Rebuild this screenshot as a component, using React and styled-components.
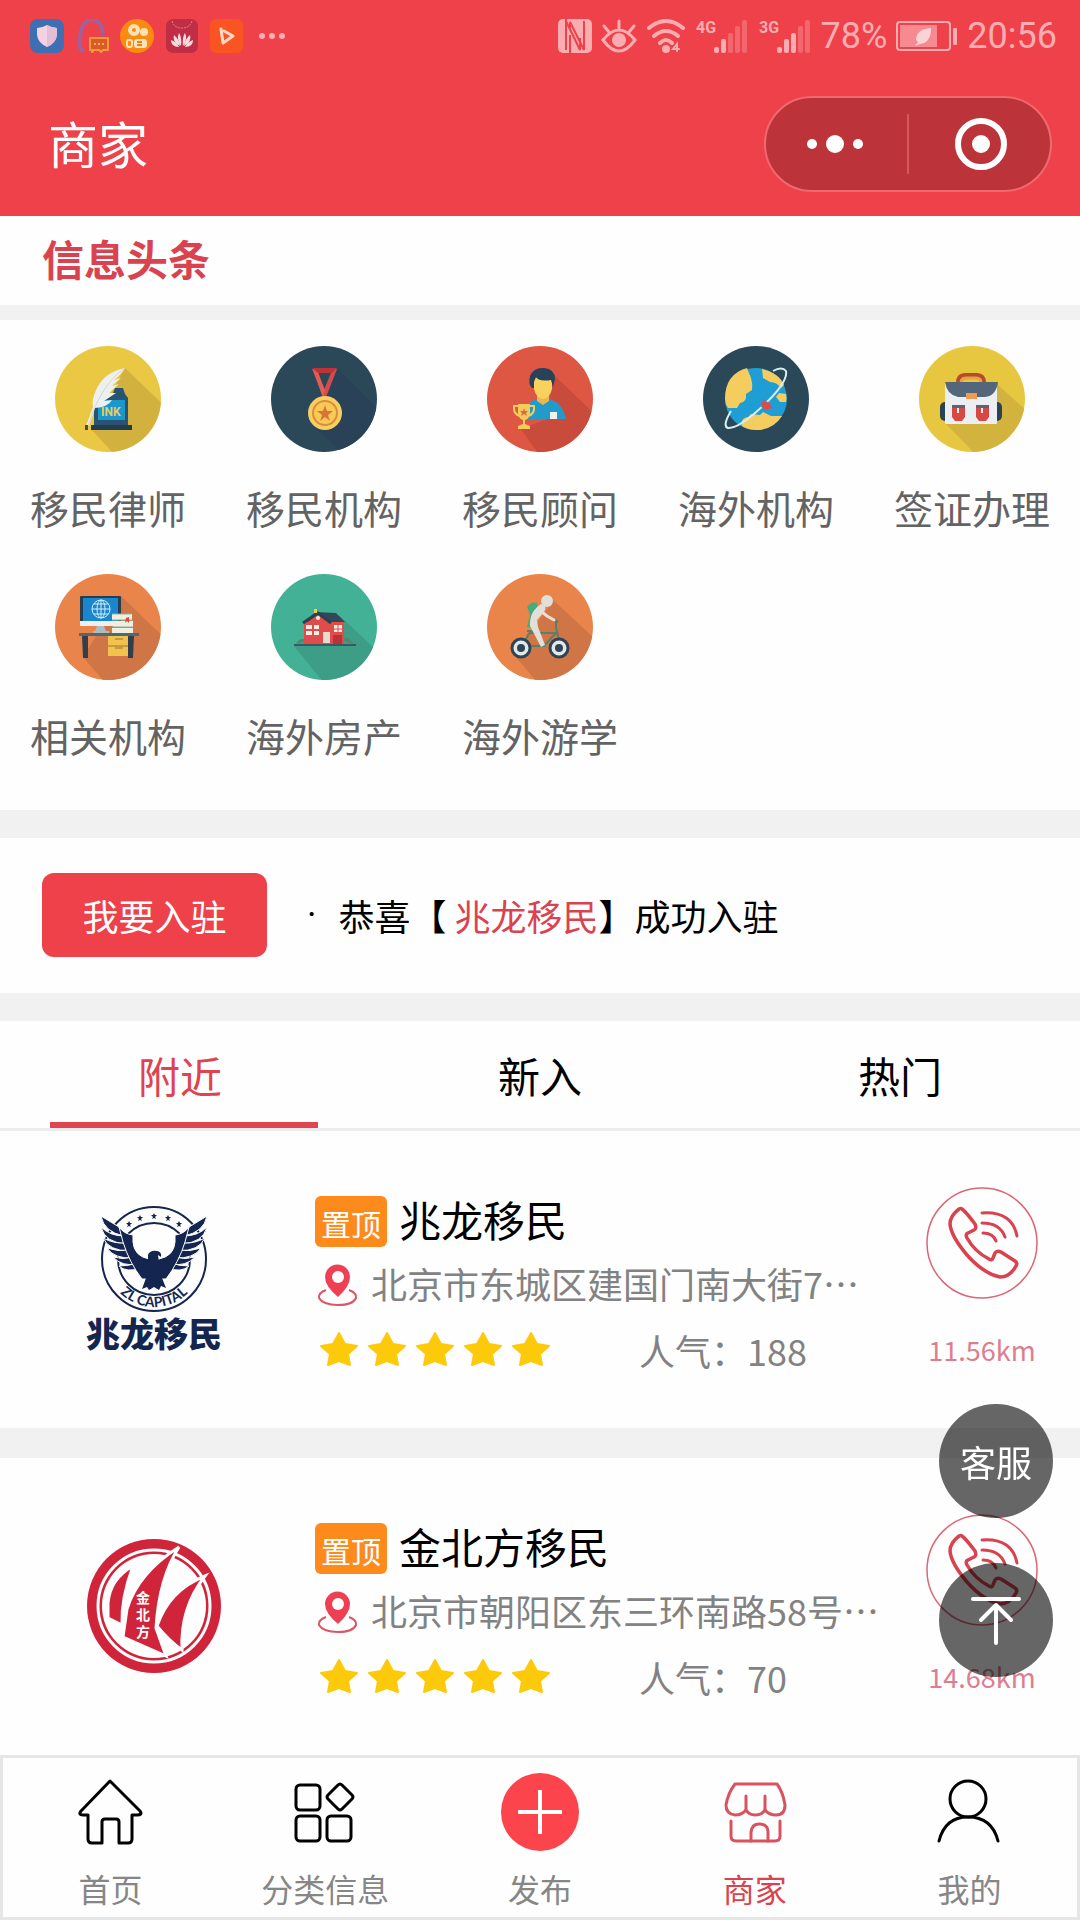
import React, { useState } from 'react';
import styled, { createGlobalStyle } from 'styled-components';

const GlobalStyle = createGlobalStyle`
	* { box-sizing: border-box; }
	body {
		margin: 0;
		background: #fefefe;
		font-family: "Noto Sans CJK SC", "Noto Sans", sans-serif;
		color: #000;
	}
	button {
		border: 0;
		padding: 0;
		background: none;
		font: inherit;
		color: inherit;
		cursor: pointer;
	}
	a { color: inherit; text-decoration: none; }
	h1, h2, h3, p, ul { margin: 0; padding: 0; font-weight: normal; }
	ul { list-style: none; }
	svg { display: block; flex: none; }
`

const Page = styled.div`
	display: flex;
	flex-direction: column;
	min-height: 100vh;
`

const Header = styled.header`
	background: #ee4149;
	color: #fff;
`

const StatusBar = styled.div`
	display: flex;
	justify-content: space-between;
	align-items: center;
	height: 72px;
	padding: 0 23px 0 30px;
	font-family: Roboto, sans-serif;
	font-size: 36px;
	color: #f9adb1;
`

const StatusGroup = styled.div`
	display: flex;
	align-items: center;
	gap: ${props => props.$gap}px;
`

const NavBar = styled.div`
	display: flex;
	justify-content: space-between;
	align-items: center;
	height: 144px;
	padding: 0 28px 0 48px;
`

const PageTitle = styled.h1`
	padding-bottom: 4px;
	font-size: 50px;
	line-height: 72px;
`

const Capsule = styled.div`
	display: flex;
	align-items: center;
	width: 288px;
	height: 96px;
	border: 2px solid #f0696f;
	border-radius: 48px;
	background: #bc333a;
`

const CapsuleButton = styled.button`
	flex: 1;
	display: flex;
	justify-content: center;
	height: 60px;
	align-items: center;
	& + & { border-left: 2px solid #d8575d; }
`

const Headline = styled.h2`
	padding: 12px 42px 17px;
	font-size: 42px;
	font-weight: bold;
	line-height: 60px;
	color: #d9434f;
`

const Band = styled.div`
	height: ${props => props.$size}px;
	background: #f1f1f1;
`

const CategoryGrid = styled.nav`
	display: grid;
	grid-template-columns: repeat(5, 1fr);
	row-gap: 37px;
	padding: 26px 0 45px;
`

const CategoryItem = styled.a`
	display: flex;
	flex-direction: column;
	align-items: center;
	gap: 25px;
	font-size: 39px;
	line-height: 60px;
	color: #636363;
`

const JoinRow = styled.section`
	display: flex;
	align-items: center;
	padding: 35px 42px 36px;
	gap: 40px;
	font-size: 36px;
`

const JoinButton = styled.button`
	width: 225px;
	height: 84px;
	border-radius: 12px;
	background: #ee4149;
	color: #fff;
`

const Notice = styled.p`
	display: flex;
	align-items: center;
	gap: 22px;
	white-space: nowrap;
	em { font-style: normal; color: #d9434f; }
`

const NoticeDot = styled.span`
	font-family: Roboto, sans-serif;
`

const Tabs = styled.div`
	border-bottom: 3px solid #ececec;
`

const TabList = styled.div`
	display: flex;
	height: 101px;
`

const Tab = styled.button`
	flex: 1;
	padding-top: 6px;
	font-size: 42px;
	line-height: 60px;
	color: ${props => props.$active ? '#e0434f' : '#000'};
`

const TabSlider = styled.div`
	width: 268px;
	height: 6px;
	margin-left: 50px;
	background: #df454e;
`

const MerchantCard = styled.li`
	display: flex;
	align-items: center;
	padding: 56px 42px 44px 82px;
	& + & { border-top: 30px solid #f1f1f1; }
`

const MerchantInfo = styled.div`
	flex: 1;
	min-width: 0;
	margin-left: 89px;
	font-size: 36px;
	color: #828282;
`

const InfoRow = styled.div`
	display: flex;
	align-items: center;
	height: 64px;
	gap: ${props => props.$gap || 0}px;
	white-space: nowrap;
`

const Badge = styled.span`
	width: 72px;
	height: 51px;
	border-radius: 6px;
	background: #fc8b1c;
	color: #fff;
	font-size: 30px;
	line-height: 55px;
	text-align: center;
`

const MerchantName = styled.h3`
	padding-bottom: 6px;
	font-size: 42px;
	line-height: 56px;
	color: #000;
`

const Address = styled.span`
	padding-bottom: 6px;
`

const Rating = styled.div`
	display: flex;
`

const ContactColumn = styled.div`
	display: flex;
	flex-direction: column;
	align-items: center;
	gap: 21px;
	width: 112px;
`

const Distance = styled.span`
	padding-bottom: 4px;
	font-size: 27px;
	line-height: 60px;
	color: #dc7d90;
`

const TabBar = styled.nav`
	position: sticky;
	bottom: 0;
	display: flex;
	margin-top: auto;
	padding: 14px 0 7px;
	border: 3px solid #e6e6e6;
	background: #fefefe;
`

const TabBarItem = styled.a`
	flex: 1;
	display: flex;
	flex-direction: column;
	align-items: center;
	gap: 14px;
	font-size: 32px;
	line-height: 44px;
	color: ${props => props.$active ? '#d9434f' : '#868686'};
`

const TabBarIcon = styled.span`
	display: flex;
	align-items: center;
	height: 80px;
`

const FloatingActions = styled.div`
	position: fixed;
	right: 27px;
	bottom: 243px;
	z-index: 2;
	display: flex;
	flex-direction: column;
	gap: 45px;
`

const FloatingButton = styled.button`
	display: flex;
	justify-content: center;
	align-items: center;
	width: 114px;
	height: 114px;
	border-radius: 50%;
	background: rgba(0, 0, 0, .6);
	color: #fff;
	font-size: 36px;
`

// app notification icons
function NotificationIcons() {
	return (
		<>
			<svg width="34" height="34" viewBox="0 0 34 34">
				<rect width="34" height="34" rx="8" fill="#3f6fb3" />
				<path d="M17 6Q22 9 27 9V16Q26 24 17 28Q8 24 7 16V9Q12 9 17 6Z" fill="#f3d3e2" />
				<path d="M17 6Q22 9 27 9V16Q26 24 17 28Z" fill="#e4bdd6" />
			</svg>
			<svg width="34" height="34" viewBox="0 0 34 34">
				<path d="M9 32Q2 30 5 20Q6 1 17 1Q27 1 28 16" fill="none" stroke="#a0609c" strokeWidth="4" />
				<path d="M15 19H33V31H28L26 33L24 31H19L17 33V31H15Z" fill="#dc5a28" stroke="#f19a3c" strokeWidth="2" />
				<path d="M19 25H29" stroke="#f8b45c" strokeWidth="2" strokeDasharray="2 2" />
			</svg>
			<svg width="34" height="34" viewBox="0 0 34 34">
				<circle cx="17" cy="17" r="17" fill="#fb8a10" />
				<circle cx="14" cy="11" r="4" fill="none" stroke="#fbe3b6" strokeWidth="4" />
				<circle cx="24" cy="13" r="2" fill="none" stroke="#fbe3b6" strokeWidth="4" />
				<rect x="14" y="20" width="13" height="9" rx="3" fill="#fbe3b6" />
				<rect x="7" y="21" width="5" height="7" rx="2" fill="none" stroke="#fbe3b6" strokeWidth="2" />
				<path d="M17 23H22M17 26H22" stroke="#e8811b" strokeWidth="2" />
			</svg>
			<svg width="34" height="34" viewBox="0 0 34 34">
				<rect x="1" width="32" height="34" rx="7" fill="#c02e45" />
				<path d="M7 2Q9 9 17 9Q25 9 27 2" fill="none" stroke="#e8828f" strokeWidth="1" strokeDasharray="2 1" />
				<g fill="#fbdde0">
					<path d="M16 27Q11 20 14 14Q17 18 16 27Z" />
					<path d="M18 27Q23 20 20 14Q17 18 18 27Z" />
					<path d="M15 27Q7 23 9 16Q14 20 15 27Z" />
					<path d="M19 27Q27 23 25 16Q20 20 19 27Z" />
					<path d="M14 28Q6 28 6 21Q12 23 14 28Z" />
					<path d="M20 28Q28 28 28 21Q22 23 20 28Z" />
				</g>
			</svg>
			<svg width="34" height="34" viewBox="0 0 34 34">
				<rect width="33" height="34" rx="6" fill="#fb5423" />
				<path d="M11 10L13 24L23 17L14 12" fill="none" stroke="#fbd9c6" strokeWidth="3" strokeLinejoin="round" strokeLinecap="round" />
			</svg>
			<svg width="34" height="34" viewBox="0 0 34 34" fill="currentColor">
				<circle cx="7" cy="17" r="3" /><circle cx="17" cy="17" r="3" /><circle cx="27" cy="17" r="3" />
			</svg>
		</>
	)
}

function SignalIcon({ network, level }) {
	return (
		<svg width="54" height="44" viewBox="0 -5 54 44" fill="currentColor">
			<text x="1" y="14" fontFamily="Roboto, sans-serif" fontSize="16" fontWeight="bold">{network}</text>
			{[6, 14, 20, 27, 33].map((h, i) => (
				<rect key={h} x={19 + i * 7} y={34 - h} width="5" height={h} rx="2" opacity={i < level ? 1 : 0.35} />
			))}
		</svg>
	)
}

function SystemIcons() {
	return (
		<>
			<svg width="34" height="34" viewBox="0 0 34 34">
				<rect width="34" height="34" rx="5" fill="#f9adb1" />
				<path d="M8 0V31M8 2L22 31V19M12 16V34M12 9V3L26 31V2" fill="none" stroke="#ee4149" strokeWidth="2" />
			</svg>
			<svg width="36" height="34" viewBox="0 0 36 34" fill="none" stroke="currentColor" strokeWidth="3" strokeLinecap="round">
				<path d="M2 21Q18 1 34 21Q18 43 2 21Z" />
				<circle cx="18" cy="21" r="7" fill="currentColor" stroke="none" />
				<path d="M18 10V2M8 13L3 7M28 13L33 7" />
			</svg>
			<svg width="40" height="34" viewBox="0 0 40 34" fill="none" stroke="currentColor" strokeWidth="4" strokeLinecap="round">
				<path d="M3 9Q20 -5 37 9M8 17Q20 7 32 17M14 24Q20 18 26 24" />
				<circle cx="20" cy="30" r="4" fill="currentColor" stroke="none" />
				<path d="M31 32V25L27 30H33" strokeWidth="2" />
			</svg>
			<SignalIcon network="4G" level={2} />
			<SignalIcon network="3G" level={3} />
		</>
	)
}

function BatteryIcon() {
	return (
		<svg width="62" height="32" viewBox="0 0 62 32">
			<rect x="1" y="2" width="53" height="28" rx="3" fill="none" stroke="#f9adb1" strokeWidth="2" />
			<rect x="4" y="5" width="37" height="22" fill="#f58a90" />
			<rect x="57" y="8" width="4" height="17" rx="1" fill="#f9adb1" />
			<path d="M35 8Q20 9 20 20L22 22L19 26L24 24Q35 23 35 8Z" fill="#fbd3d5" />
		</svg>
	)
}

const categories = [
	{
		name: '移民律师', color: '#eac843',
		art: <>
			<path d="M70 22L120 70V120H70L36 83Z" fill="#d3b13f" />
			<path d="M39 54L50 47H58L60 42H68L70 48L73 52V80H39Z" fill="#2a5271" />
			<rect x="36" y="79" width="41" height="5" fill="#243c50" />
			<rect x="43" y="54" width="27" height="20" fill="#1b97c9" />
			<path d="M70 22Q50 26 42 42Q36 54 38 61L31 80L34 80L40 62Q53 61 57 54L49 55L61 47L54 47L64 38L57 40L66 32L59 34Q66 29 70 22Z" fill="#eef0ee" />
			<path d="M70 22Q46 38 33 80" fill="none" stroke="#d2d7d4" />
			<text x="46" y="70" fontFamily="Roboto, sans-serif" fontSize="12" fontWeight="bold" fill="#e4cf68">INK</text>
			<rect x="30" y="79" width="3" height="5" fill="#4a4c48" />
		</>
	},
	{
		name: '移民机构', color: '#2b4858',
		art: <>
			<path d="M66 22L120 76V120H86L42 80Z" fill="#2a4258" />
			<path d="M41 23L54 54L66 23L62 22L53 44L46 22Z" fill="#d34b4c" />
			<path d="M42 22H66L61 27H47Z" fill="#bf3338" />
			<path d="M47 27L54 44L52 52L42 24Z" fill="#e35c57" />
			<circle cx="54" cy="67" r="17" fill="#f6ce62" />
			<circle cx="54" cy="67" r="12" fill="#f9c958" stroke="#dc8d37" strokeWidth="2" />
			<path d="M54 59L56 65H62L57 69L59 75L54 71L49 75L51 69L46 65H52Z" fill="#d77436" />
		</>
	},
	{
		name: '移民顾问', color: '#de5743',
		art: <>
			<path d="M66 28L120 80V120H60L34 83L60 73Z" fill="#c84b3c" />
			<path d="M41 73V60Q44 53 53 53H61Q75 55 79 73Z" fill="#229bcb" />
			<path d="M50 50H62V55L56 59L50 55Z" fill="#efb64d" />
			<path d="M47 32H65V43Q63 52 56 53Q49 52 47 43Z" fill="#f9d15d" />
			<path d="M45 42Q41 38 43 30Q47 21 57 22Q68 23 68 33L66 41L64 34Q52 36 49 31L47 36V42Z" fill="#28425b" />
			<rect x="63" y="66" width="7" height="7" fill="#edf2ee" />
			<path d="M31 58H43V68Q42 73 38 74V78L43 80V83H31V80L36 78V74Q32 73 31 68Z" fill="#f7ca5c" />
			<path d="M31 60H27Q26 68 33 70M43 60H47Q48 68 41 70" fill="none" stroke="#f7ca5c" strokeWidth="2" />
			<path d="M37 62L38 65H41L39 67L40 70L37 68L34 70L35 67L33 65H36Z" fill="#d96b3c" />
		</>
	},
	{
		name: '海外机构', color: '#2b4859',
		art: <>
			<circle cx="53" cy="53" r="31" fill="#1f9dd5" />
			<path d="M22 53Q22 28 44 22L48 32Q50 38 49 44L43 48Q44 56 37 57L34 62L25 62Q22 58 22 53Z" fill="#f5cd5e" />
			<path d="M59 23Q76 27 81 39L78 42Q74 36 67 36L60 32Z" fill="#f5cd5e" />
			<path d="M83 48L76 47L73 51L77 56L83 56Q84 52 83 48Z" fill="#f5cd5e" />
			<path d="M39 80Q37 72 45 71L48 68L57 69L60 66L68 70H79Q70 84 53 84Q45 84 39 80Z" fill="#f5cd5e" />
			<path d="M70 25Q79 20 83 25Q85 36 62 58Q36 83 25 82Q19 80 28 65" fill="none" stroke="#d8eef0" strokeWidth="2" />
			<path d="M60 54L67 57L69 62L63 64L58 61Z" fill="#db4c4c" />
		</>
	},
	{
		name: '签证办理', color: '#e8c740',
		art: <>
			<path d="M78 38L120 76V120H68L27 78Z" fill="#d2b33e" />
			<path d="M39 37Q39 29 46 29H58Q65 29 65 37" fill="none" stroke="#b84b28" strokeWidth="4" />
			<path d="M42 37Q42 32 47 32H57Q62 32 62 37" fill="none" stroke="#e8a04a" strokeWidth="3" />
			<rect x="21" y="56" width="62" height="19" rx="5" fill="#2b4350" />
			<rect x="26" y="36" width="52" height="42" rx="1" fill="#eceff2" />
			<path d="M26 36H79Q77 50 66 51H39Q28 49 26 36Z" fill="#54677a" />
			<rect x="47" y="47" width="11" height="6" fill="#f09b52" />
			<path d="M33 60H46V71L43 75H36L33 71ZM57 60H70V71L67 75H60L57 71Z" fill="#d94742" />
			<path d="M33 59H46V62H33ZM57 59H70V62H57Z" fill="#54677a" />
			<path d="M39 62V67M63 62V67" stroke="#f6efe2" strokeWidth="2" />
		</>
	},
	{
		name: '相关机构', color: '#e9854b',
		art: <>
			<path d="M66 22L120 74V120H60L28 83Z" fill="#cf7546" />
			<rect x="25" y="22" width="41" height="30" rx="1" fill="#263e50" />
			<rect x="28" y="24" width="35" height="23" fill="#1a86cd" />
			<rect x="25" y="47" width="41" height="5" fill="#edf0ee" />
			<g fill="none" stroke="#d5edf4">
				<circle cx="46" cy="35" r="9" />
				<ellipse cx="46" cy="35" rx="4" ry="9" />
				<path d="M46 26V44M37 35H55M39 30H53M39 40H53" />
			</g>
			<path d="M42 52H49L51 57H54V59H38V57H40Z" fill="#aebbc3" />
			<path d="M57 40H77V46H57ZM58 47H78V53H58ZM57 54H78V60H57Z" fill="#f0eee0" />
			<path d="M57 46H78M57 53H78M57 40H76" stroke="#8bb39a" strokeWidth="1" />
			<path d="M71 44L74 43V49L72 47L70 49Z" fill="#d9473f" />
			<rect x="24" y="59" width="60" height="3" fill="#4d6a6e" />
			<rect x="53" y="62" width="21" height="20" fill="#f1c34e" />
			<path d="M53 72H74M60 65H68M60 74H68" stroke="#9a7331" strokeWidth="1" />
			<path d="M27 62H33V84H28ZM73 62H79L78 84H73Z" fill="#333d4c" />
		</>
	},
	{
		name: '海外房产', color: '#43b195',
		art: <>
			<path d="M69 42L120 90V120H62L23 72Z" fill="#3d9d86" />
			<path d="M25 70Q29 63 35 66M70 66Q77 60 82 70" fill="#58836c" />
			<path d="M32 48L45 38L65 39L74 48Z" fill="#31485a" />
			<path d="M33 48H73V70H33ZM37 48L47 40L58 48Z" fill="#e04c4a" />
			<path d="M32 49L47 39L60 49" fill="none" stroke="#2a4053" strokeWidth="3" />
			<path d="M35 51H41V55H35ZM43 51H48V55H43ZM35 57H41V61H35ZM43 57H48V61H43ZM63 51H71V58H63Z" fill="#f2efe8" />
			<path d="M67 51V58M63 55H71" stroke="#e04c4a" />
			<rect x="52" y="58" width="7" height="11" fill="#e8dad0" />
			<rect x="62" y="61" width="9" height="9" fill="#be3038" />
			<circle cx="47" cy="44" r="2" fill="#eee" />
			<path d="M43 35H46V39H43Z" fill="#e7cf5e" />
			<rect x="23" y="70" width="62" height="2" fill="#365b67" />
		</>
	},
	{
		name: '海外游学', color: '#e9854b',
		art: <>
			<path d="M66 26L120 76V120H60L28 82Z" fill="#cf7546" />
			<path d="M50 29Q44 27 40 33L43 41L40 53L46 54L52 38Z" fill="#47ab7b" />
			<path d="M69 47V54L74 74M42 59L35 74M42 59H69L57 72H36M40 57H46" fill="none" stroke="#59806b" strokeWidth="2" />
			<path d="M67 46L71 48" stroke="#59806b" strokeWidth="3" />
			<path d="M54 30Q61 31 57 38L50 46L51 53L58 71L54 73L43 52Q42 38 54 30Z" fill="#e2dfd8" />
			<path d="M55 38L60 42L67 46" fill="none" stroke="#edded0" strokeWidth="3" strokeLinecap="round" />
			<circle cx="60" cy="27" r="6" fill="#e2dfd8" />
			<circle cx="34" cy="74" r="9" fill="#dcebee" stroke="#344353" strokeWidth="3" />
			<circle cx="72" cy="74" r="9" fill="#dcebee" stroke="#344353" strokeWidth="3" />
			<circle cx="34" cy="74" r="4" fill="#344353" />
			<circle cx="72" cy="74" r="4" fill="#344353" />
		</>
	}
]

function CategoryIcon({ id, color, art }) {
	return (
		<svg width="106" height="106" viewBox="0 0 106 106">
			<clipPath id={id}><circle cx="53" cy="53" r="53" /></clipPath>
			<g clipPath={`url(#${id})`}>
				<rect width="106" height="106" fill={color} />
				{art}
			</g>
		</svg>
	)
}

// one wing, the other side is mirrored
function EagleWing() {
	return (
		<g fill="#14264f" stroke="#fefefe" strokeWidth="1">
			<path d="M19 10L37 21L42 30Q22 26 19 10Z" />
			<path d="M19 21Q28 30 42 30L45 38Q23 37 19 21Z" />
			<path d="M21 32Q32 38 44 37L48 45Q27 45 21 32Z" />
			<path d="M25 42Q36 46 47 44L52 52Q32 53 25 42Z" />
			<path d="M31 51Q41 54 51 51L56 58Q40 61 31 51Z" />
			<path d="M37 60Q47 60 55 57L60 62Q44 67 37 60Z" />
			<path d="M37 21Q42 28 51 29L51 36Q52 50 67 53L73 56V73H60Q47 56 41 36Z" />
		</g>
	)
}

function EagleLogo() {
	return (
		<svg width="144" height="160" viewBox="0 0 144 160">
			<defs><path id="eagle-arc" d="M24 53A48 48 0 0 0 120 53" /></defs>
			<circle cx="72" cy="53" r="52" fill="none" stroke="#14264f" strokeWidth="2" />
			<circle cx="72" cy="53" r="36" fill="none" stroke="#14264f" strokeWidth="2" />
			{[[47, 18], [58, 12], [72, 10], [86, 12], [97, 18]].map(([x, y]) => (
				<path key={x} transform={`translate(${x} ${y})`} d="M0 -3L1 -1H3L1 1L2 3L0 2L-2 3L-1 1L-3 -1H-1Z" fill="#14264f" />
			))}
			<EagleWing />
			<g transform="translate(144 0) scale(-1 1)"><EagleWing /></g>
			<path d="M66 56V49Q68 44 75 45Q80 46 79 51L76 49L77 56L88 60L80 72L84 82L79 80L77 84L72 81L67 84L65 81L60 83L64 72L56 60Z" fill="#14264f" />
			<text fontFamily="Lato, sans-serif" fontSize="14" fontWeight="bold" fill="#14264f" textAnchor="middle">
				<textPath href="#eagle-arc" startOffset="50%">ZL CAPITAL</textPath>
			</text>
			<text x="72" y="141" fontFamily="Noto Sans CJK SC, sans-serif" fontSize="34" fontWeight="900" fill="#14264f" textAnchor="middle">兆龙移民</text>
		</svg>
	)
}

function SailLogo() {
	return (
		<svg width="144" height="160" viewBox="0 0 144 160">
			<circle cx="72" cy="73" r="67" fill="#d0243b" />
			<circle cx="72" cy="73" r="56" fill="#d0243b" stroke="#fefefe" strokeWidth="3" />
			<circle cx="72" cy="73" r="52" fill="#fefefe" />
			<g fill="#d0243b" stroke="#fefefe" strokeWidth="3">
				<path d="M51 33Q28 46 26 70V85L40 92Q39 65 51 33Z" />
				<path d="M97 14Q56 40 45 76L41 104L84 123L74 95Q77 45 97 14Z" />
				<path d="M123 43Q87 57 75 93Q87 108 100 117Q98 75 123 43Z" />
			</g>
			<g fill="#fff" fontFamily="Noto Sans CJK SC, sans-serif" fontSize="14" fontWeight="bold" textAnchor="middle">
				<text x="61" y="70">金</text>
				<text x="61" y="87">北</text>
				<text x="61" y="104">方</text>
			</g>
		</svg>
	)
}

function PinIcon() {
	return (
		<svg width="48" height="44" viewBox="-3 0 48 44">
			<path d="M8 26Q0 29 1 34Q5 41 20 41Q35 41 38 34Q39 29 31 26" fill="none" stroke="#dd5666" strokeWidth="2" />
			<path d="M20 33Q7 22 7 13A12 12 0 0 1 32 13Q32 22 20 33Z" fill="#ee4052" />
			<circle cx="20" cy="13" r="6" fill="#fff" />
		</svg>
	)
}

function StarIcon() {
	return (
		<svg width="48" height="38" viewBox="0 0 48 38">
			<path d="M24 2L30 13L42 15L33 23L35 34L24 30L13 34L15 23L6 15L18 13Z" fill="#fdca0b" stroke="#fdca0b" strokeWidth="2" strokeLinejoin="round" />
		</svg>
	)
}

function CallIcon() {
	return (
		<svg width="112" height="112" viewBox="0 0 112 112" fill="none" stroke="#d9434f" strokeWidth="3.5" strokeLinecap="round" strokeLinejoin="round">
			<circle cx="56" cy="56" r="55" stroke="#dc6676" strokeWidth="1.5" />
			<path d="M36 22Q40 25 49 37Q51 42 48 43L42 46Q39 47 41 51Q49 65 63 72Q66 74 67 71L69 66Q71 63 75 65L89 74Q92 76 90 79Q84 90 74 90Q58 87 41 68Q25 49 24 37Q24 29 33 22Q35 21 36 22Z" />
			<path d="M56 26Q86 24 91 49M56 36Q74 36 79 50M57 46Q67 46 70 54" strokeWidth="3" />
		</svg>
	)
}

const merchants = [
	{ name: '兆龙移民', address: '北京市东城区建国门南大街7…', hits: 188, distance: '11.56km', logo: <EagleLogo /> },
	{ name: '金北方移民', address: '北京市朝阳区东三环南路58号…', hits: 70, distance: '14.68km', logo: <SailLogo /> }
]

function Merchant({ item }) {
	return (
		<MerchantCard>
			{item.logo}
			<MerchantInfo>
				<InfoRow $gap={12}>
					<Badge>置顶</Badge>
					<MerchantName>{item.name}</MerchantName>
				</InfoRow>
				<InfoRow $gap={8}>
					<PinIcon />
					<Address>{item.address}</Address>
				</InfoRow>
				<InfoRow $gap={84}>
					<Rating role="img" aria-label="5">
						{[1, 2, 3, 4, 5].map(n => <StarIcon key={n} />)}
					</Rating>
					<span>人气：{item.hits}</span>
				</InfoRow>
			</MerchantInfo>
			<ContactColumn>
				<button type="button" aria-label="电话"><CallIcon /></button>
				<Distance>{item.distance}</Distance>
			</ContactColumn>
		</MerchantCard>
	)
}

const lineIcon = { width: 72, height: 72, viewBox: '0 0 72 72', fill: 'none', strokeWidth: 3, strokeLinecap: 'round', strokeLinejoin: 'round' }

const tabBarItems = [
	{
		name: '首页',
		icon: <svg {...lineIcon} stroke="#000">
			<path d="M36 5L7 35Q4 39 9 39H14V63Q14 67 18 67H28V46Q28 43 31 43H42Q45 43 45 46V67H54Q58 67 58 63V39H63Q69 39 66 35Z" />
		</svg>
	},
	{
		name: '分类信息',
		icon: <svg {...lineIcon} stroke="#000">
			<rect x="7" y="9" width="24" height="25" rx="4" />
			<rect x="7" y="40" width="24" height="25" rx="4" />
			<rect x="38" y="40" width="24" height="25" rx="4" />
			<path d="M49 9Q51 7 53 9L63 19Q65 21 63 23L53 33Q51 35 49 33L39 23Q37 21 39 19Z" />
		</svg>
	},
	{
		name: '发布',
		icon: <svg width="80" height="80" viewBox="0 0 80 80">
			<circle cx="40" cy="40" r="39" fill="#fb444c" />
			<path d="M18 40H62M40 18V62" stroke="#fff" strokeWidth="4" />
		</svg>
	},
	{
		name: '商家', active: true,
		icon: <svg {...lineIcon} stroke="#d9535f">
			<path d="M16 8H58Q64 16 66 29Q66 39 57 39Q50 39 46 34Q43 39 36 39Q30 39 27 34Q23 39 16 39Q7 38 7 29Q9 17 16 8Z" />
			<path d="M27 20V34M46 20V34M12 45V60Q12 65 17 65H56Q61 65 61 60V45" />
			<path d="M32 65V56Q33 48 40 48Q49 48 49 56V65" />
		</svg>
	},
	{
		name: '我的',
		icon: <svg {...lineIcon} stroke="#000">
			<circle cx="34" cy="23" r="18" />
			<path d="M5 65Q11 41 34 41Q58 41 64 65" />
		</svg>
	}
]

const tabNames = ['附近', '新入', '热门']

export default function App() {
	const [tab, setTab] = useState(0)

	return (
		<Page>
			<GlobalStyle />
			<Header>
				<StatusBar>
					<StatusGroup $gap={11}><NotificationIcons /></StatusGroup>
					<StatusGroup $gap={9}>
						<SystemIcons />
						<span>78%</span>
						<BatteryIcon />
						<span>20:56</span>
					</StatusGroup>
				</StatusBar>
				<NavBar>
					<PageTitle>商家</PageTitle>
					<Capsule>
						<CapsuleButton type="button" aria-label="更多">
							<svg width="60" height="20" viewBox="0 0 60 20" fill="#fff">
								<circle cx="5" cy="10" r="5" /><circle cx="28" cy="10" r="9" /><circle cx="51" cy="10" r="5" />
							</svg>
						</CapsuleButton>
						<CapsuleButton type="button" aria-label="关闭">
							<svg width="54" height="54" viewBox="0 0 54 54">
								<circle cx="28" cy="27" r="23" fill="none" stroke="#fff" strokeWidth="6" />
								<circle cx="28" cy="27" r="9" fill="#fff" />
							</svg>
						</CapsuleButton>
					</Capsule>
				</NavBar>
			</Header>

			<Headline>信息头条</Headline>
			<Band $size={15} />

			<CategoryGrid>
				{categories.map((item, i) => (
					<CategoryItem key={item.name} href="#">
						<CategoryIcon id={`category-${i}`} color={item.color} art={item.art} />
						{item.name}
					</CategoryItem>
				))}
			</CategoryGrid>
			<Band $size={28} />

			<JoinRow>
				<JoinButton type="button">我要入驻</JoinButton>
				<Notice>
					<NoticeDot>·</NoticeDot>
					<span>恭喜【 <em>兆龙移民</em>】成功入驻</span>
				</Notice>
			</JoinRow>
			<Band $size={28} />

			<Tabs>
				<TabList role="tablist">
					{tabNames.map((name, i) => (
						<Tab key={name} type="button" role="tab" aria-selected={tab === i} $active={tab === i} onClick={() => setTab(i)}>{name}</Tab>
					))}
				</TabList>
				<TabSlider style={{ transform: `translateX(calc(${tab} * 100vw / 3))` }} />
			</Tabs>

			<ul>
				{merchants.map(item => <Merchant key={item.name} item={item} />)}
			</ul>

			<TabBar>
				{tabBarItems.map(item => (
					<TabBarItem key={item.name} href="#" $active={item.active}>
						<TabBarIcon>{item.icon}</TabBarIcon>
						{item.name}
					</TabBarItem>
				))}
			</TabBar>

			<FloatingActions>
				<FloatingButton type="button">客服</FloatingButton>
				<FloatingButton type="button" aria-label="返回顶部">
					<svg width="54" height="54" viewBox="0 0 54 54" fill="none" stroke="#fff" strokeWidth="4" strokeLinecap="round" strokeLinejoin="round">
						<path d="M4 6H50M27 50V12M12 27L27 12L42 27" />
					</svg>
				</FloatingButton>
			</FloatingActions>
		</Page>
	)
}
